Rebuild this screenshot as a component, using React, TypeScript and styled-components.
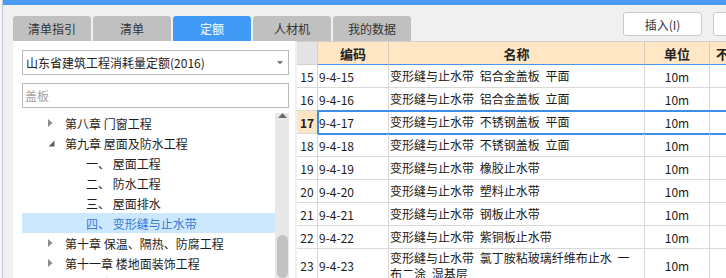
import React from 'react';
import styled, { createGlobalStyle, css } from 'styled-components';

const GlobalStyle = createGlobalStyle`
  html, body { margin: 0; padding: 0; background: #f0f0f0; }
  body {
    font-family: "Noto Sans CJK SC", "Noto Sans", sans-serif;
    font-size: 12px;
    color: #222;
  }
  * { box-sizing: border-box; }
`;

const BLUE = '#4a9bf5';

const Screen = styled.div`
  display: flex;
  width: 726px;
  height: 278px;
  overflow: hidden;
  background: #f0f0f0;
`;

const EdgeStrip = styled.div`
  width: 3px;
  flex: none;
  background: #f4f6f9;
  border-right: 1px solid #c3c9d2;
`;

const Main = styled.div`
  flex: 1;
  min-width: 0;
  display: flex;
  flex-direction: column;
  overflow: hidden;
`;

const TopBar = styled.div`
  height: 5px;
  flex: none;
  background: ${BLUE};
`;

const Toolbar = styled.div`
  height: 36px;
  flex: none;
  display: flex;
  align-items: flex-start;
  padding-left: 10px;
`;

const TabList = styled.div`
  display: flex;
  gap: 2px;
  align-self: flex-end;
  flex: none;
`;

const Tab = styled.div<{ $active?: boolean }>`
  width: 78px;
  height: 25px;
  border-radius: 3px 3px 0 0;
  display: flex;
  align-items: center;
  justify-content: center;
  font-size: 12px;
  background: #c0c0c0;
  color: #333;
  ${(p) =>
    p.$active &&
    css`
      background: #429af7;
      color: #fff;
    `}
`;

const ButtonGroup = styled.div`
  display: flex;
  gap: 11px;
  flex: none;
  margin-left: 212px;
  margin-top: 7px;
`;

const ToolButton = styled.div`
  width: 79px;
  height: 24px;
  background: #fff;
  border: 1px solid #c9c9c9;
  border-radius: 3px;
  display: flex;
  align-items: center;
  justify-content: center;
  font-size: 12px;
  color: #333;
`;

const Body = styled.div`
  flex: 1;
  min-height: 0;
  display: flex;
  gap: 2px;
  padding-left: 10px;
`;

const LeftPanel = styled.div`
  width: 282px;
  flex: none;
  background: #fff;
  padding: 9px 6px 0 9px;
  display: flex;
  flex-direction: column;
`;

const SelectBox = styled.div`
  height: 25px;
  flex: none;
  border: 1px solid #b9b9b9;
  display: flex;
  align-items: center;
  justify-content: space-between;
  padding: 0 5px 0 3px;
  font-size: 12px;
  color: #222;
`;

const SearchBox = styled.div`
  height: 25px;
  flex: none;
  margin-top: 8px;
  border: 1px solid #b9b9b9;
  display: flex;
  align-items: center;
  padding-left: 2px;
  color: #a3a3a3;
  font-size: 12px;
`;

const TreeWrap = styled.div`
  margin-top: 5px;
  flex: 1;
  min-height: 0;
  display: flex;
  overflow: hidden;
`;

const TreeList = styled.div`
  flex: 1;
  min-width: 0;
`;

const TreeRow = styled.div<{ $indent: number; $selected?: boolean }>`
  height: 20px;
  display: flex;
  align-items: center;
  padding-left: ${(p) => p.$indent}px;
  white-space: nowrap;
  font-size: 12px;
  color: #1e1e1e;
  ${(p) =>
    p.$selected &&
    css`
      background: #cce8ff;
      color: #3a78d4;
    `}
`;

const Toggle = styled.span`
  width: 17px;
  flex: none;
  display: flex;
  align-items: center;
`;

const Scrollbar = styled.div`
  width: 14px;
  flex: none;
  background: #e8e8e8;
  display: flex;
  flex-direction: column;
  align-items: center;
`;

const ScrollArrow = styled.div`
  height: 9px;
  display: flex;
  align-items: center;
  justify-content: center;
  padding-left: 1px;
`;

const ScrollThumb = styled.div`
  width: 11px;
  height: 70px;
  margin-top: 116px;
  border-radius: 6px;
  background: #c2c2c2;
`;

const Grid = styled.div`
  flex: 1;
  min-width: 0;
  background: #fff;
  border-top: 1px solid #d0d0d0;
  overflow: hidden;
`;

const GridRow = styled.div<{ $height: number }>`
  display: grid;
  grid-template-columns: 21px 71px 256px 65px 160px;
  height: ${(p) => p.$height}px;
  position: relative;
`;

const CornerCell = styled.div`
  background: #e4e4e4;
  border-right: 1px solid #d2d2d2;
  border-bottom: 1px solid #d2d2d2;
`;

const HeadCell = styled.div<{ $align?: string }>`
  background: #ffe6c4;
  border-right: 1px solid #d6ccbc;
  border-bottom: 1px solid #4395f0;
  display: flex;
  align-items: center;
  justify-content: ${(p) => p.$align || 'center'};
  padding-left: ${(p) => (p.$align ? '6px' : '0')};
  font-size: 13px;
  font-weight: bold;
  color: #222;
  white-space: nowrap;
  overflow: hidden;
`;

const RowHead = styled.div<{ $current?: boolean }>`
  border-right: 1px solid #d9d9d9;
  border-bottom: 1px solid #d9d9d9;
  display: flex;
  align-items: center;
  justify-content: center;
  font-size: 12px;
  color: #222;
  background: #fff;
  ${(p) =>
    p.$current &&
    css`
      background: #fde4c3;
      font-weight: bold;
    `}
`;

const Cell = styled.div<{ $center?: boolean }>`
  border-right: 1px solid #d9d9d9;
  border-bottom: 1px solid #d9d9d9;
  display: flex;
  align-items: center;
  justify-content: ${(p) => (p.$center ? 'center' : 'flex-start')};
  padding-left: ${(p) => (p.$center ? '0' : '1px')};
  font-size: 12px;
  color: #1a1a1a;
  white-space: nowrap;
  overflow: hidden;
`;

const NameText = styled.span`
  word-spacing: 3px;
  line-height: 16px;
  white-space: normal;
`;

const SelectionFrame = styled.div`
  position: absolute;
  left: 20px;
  top: -1px;
  bottom: -1px;
  right: -4px;
  border: 2px solid #3b8eea;
  pointer-events: none;
`;

const CaretRight = () => (
  <svg width="5" height="8" viewBox="0 0 5 8">
    <path d="M0 0 L4.5 4 L0 8 Z" fill="#8c8c8c" />
  </svg>
);

const CaretOpen = () => (
  <svg width="7" height="7" viewBox="0 0 7 7">
    <path d="M6.5 0.5 L6.5 6.5 L0.5 6.5 Z" fill="#5e5e5e" />
  </svg>
);

const DropArrow = () => (
  <svg width="6" height="4" viewBox="0 0 6 4">
    <path d="M0 0 L6 0 L3 3.5 Z" fill="#7a7a7a" />
  </svg>
);

const UpArrow = () => (
  <svg width="9" height="5" viewBox="0 0 9 5">
    <path d="M0 5 L4.5 0 L9 5 Z" fill="#6b6b6b" />
  </svg>
);

type TreeItem = { text: string; kind: 'closed' | 'open' | 'leaf'; selected?: boolean };

const tree: TreeItem[] = [
  { text: '第八章 门窗工程', kind: 'closed' },
  { text: '第九章 屋面及防水工程', kind: 'open' },
  { text: '一、 屋面工程', kind: 'leaf' },
  { text: '二、 防水工程', kind: 'leaf' },
  { text: '三、 屋面排水', kind: 'leaf' },
  { text: '四、 变形缝与止水带', kind: 'leaf', selected: true },
  { text: '第十章 保温、隔热、防腐工程', kind: 'closed' },
  { text: '第十一章 楼地面装饰工程', kind: 'closed' },
  { text: '第十二章 墙柱面装饰与隔断幕墙工程', kind: 'closed' },
];

type Row = { no: number; code: string; name: string[]; unit: string };

const rows: Row[] = [
  { no: 15, code: '9-4-15', name: ['变形缝与止水带 铝合金盖板 平面'], unit: '10m' },
  { no: 16, code: '9-4-16', name: ['变形缝与止水带 铝合金盖板 立面'], unit: '10m' },
  { no: 17, code: '9-4-17', name: ['变形缝与止水带 不锈钢盖板 平面'], unit: '10m' },
  { no: 18, code: '9-4-18', name: ['变形缝与止水带 不锈钢盖板 立面'], unit: '10m' },
  { no: 19, code: '9-4-19', name: ['变形缝与止水带 橡胶止水带'], unit: '10m' },
  { no: 20, code: '9-4-20', name: ['变形缝与止水带 塑料止水带'], unit: '10m' },
  { no: 21, code: '9-4-21', name: ['变形缝与止水带 钢板止水带'], unit: '10m' },
  { no: 22, code: '9-4-22', name: ['变形缝与止水带 紫铜板止水带'], unit: '10m' },
  { no: 23, code: '9-4-23', name: ['变形缝与止水带 氯丁胺粘玻璃纤维布止水 一', '布二涂 湿基层'], unit: '10m' },
];

const CURRENT = 17;

export default function App() {
  return (
    <>
      <GlobalStyle />
      <Screen>
        <EdgeStrip />
        <Main>
          <TopBar />
          <Toolbar>
            <TabList>
              <Tab>清单指引</Tab>
              <Tab>清单</Tab>
              <Tab $active>定额</Tab>
              <Tab>人材机</Tab>
              <Tab>我的数据</Tab>
            </TabList>
            <ButtonGroup>
              <ToolButton>插入(I)</ToolButton>
              <ToolButton>替换(R)</ToolButton>
            </ButtonGroup>
          </Toolbar>
          <Body>
            <LeftPanel>
              <SelectBox>
                <span>山东省建筑工程消耗量定额(2016)</span>
                <DropArrow />
              </SelectBox>
              <SearchBox>盖板</SearchBox>
              <TreeWrap>
                <TreeList>
                  {tree.map((t, i) => (
                    <TreeRow key={i} $indent={t.kind === 'leaf' ? 64 : 26} $selected={t.selected}>
                      {t.kind !== 'leaf' && (
                        <Toggle>{t.kind === 'open' ? <CaretOpen /> : <CaretRight />}</Toggle>
                      )}
                      {t.text}
                    </TreeRow>
                  ))}
                </TreeList>
                <Scrollbar>
                  <ScrollArrow>
                    <UpArrow />
                  </ScrollArrow>
                  <ScrollThumb />
                </Scrollbar>
              </TreeWrap>
            </LeftPanel>
            <Grid>
              <GridRow $height={23}>
                <CornerCell />
                <HeadCell>编码</HeadCell>
                <HeadCell>名称</HeadCell>
                <HeadCell>单位</HeadCell>
                <HeadCell $align="flex-start">不含税单价</HeadCell>
              </GridRow>
              {rows.map((r) => (
                <GridRow key={r.no} $height={r.name.length > 1 ? 34 : 23}>
                  <RowHead $current={r.no === CURRENT}>{r.no}</RowHead>
                  <Cell>{r.code}</Cell>
                  <Cell>
                    <NameText>
                      {r.name.map((line, i) => (
                        <React.Fragment key={i}>
                          {i > 0 && <br />}
                          {line}
                        </React.Fragment>
                      ))}
                    </NameText>
                  </Cell>
                  <Cell $center>{r.unit}</Cell>
                  <Cell />
                  {r.no === CURRENT && <SelectionFrame />}
                </GridRow>
              ))}
            </Grid>
          </Body>
        </Main>
      </Screen>
    </>
  );
}
